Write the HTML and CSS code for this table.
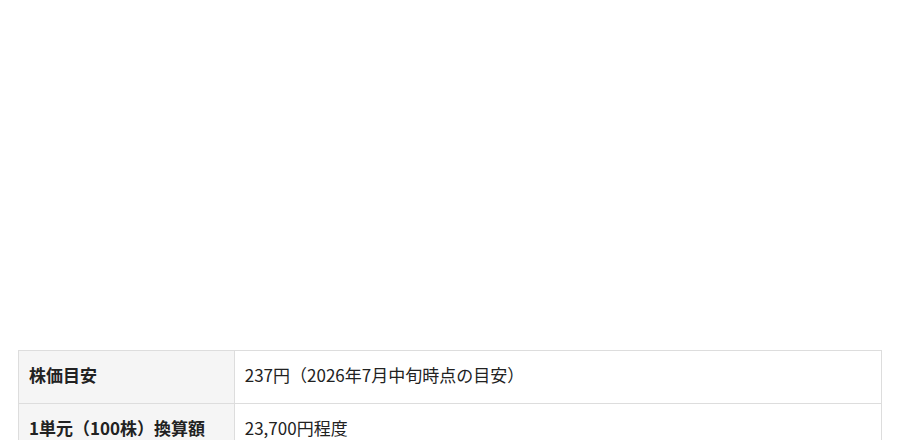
FILE: index.html
```html
<!DOCTYPE html>
<html lang="ja">
<head>
    <meta charset="UTF-8">
    <meta name="viewport" content="width=device-width, initial-scale=1.0">
    <title>株価目安</title>
    <link rel="stylesheet" href="styles.css">
</head>
<body>
<div class="container">
    <div class="blank"></div>
    <table class="info">
        <tr>
            <th>株価目安</th>
            <td>237円（2026年7月中旬時点の目安）</td>
        </tr>
        <tr>
            <th>1単元（100株）換算額</th>
            <td>23,700円程度</td>
        </tr>
    </table>
</div>
</body>
</html>
```

FILE: styles.css
```css
body {
    margin: 0;
    padding: 0;
    background-color: #fff;
    color: #222;
    font-family: "Noto Sans CJK JP", "Noto Sans", sans-serif;
}

.container {
    padding: 0 18px;
}

.blank {
    height: 350px;
}

.info {
    width: 100%;
    border-collapse: collapse;
    font-size: 17px;
    line-height: 22px;
}

.info th,
.info td {
    border: 1px solid #ddd;
    padding: 13px 10px 17px;
    text-align: left;
    vertical-align: middle;
}

.info th {
    width: 25%;
    background-color: #f5f5f5;
    font-weight: bold;
}

.info td {
    font-weight: normal;
}
```
